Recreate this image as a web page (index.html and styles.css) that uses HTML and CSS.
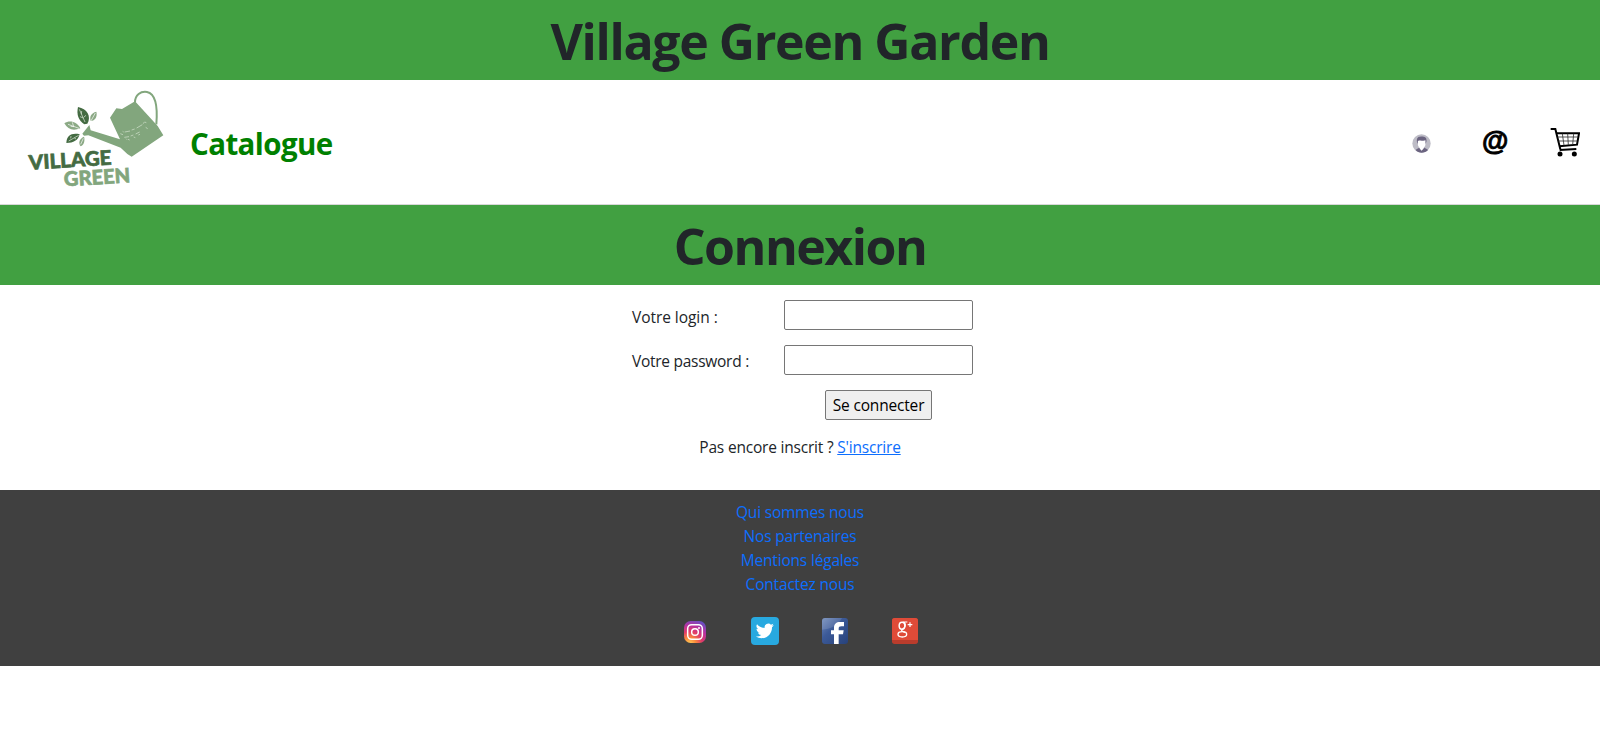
FILE: index.html
```html
<!DOCTYPE html>
<html lang="fr">
<head>
<meta charset="utf-8">
<title>Village Green Garden</title>
<link rel="stylesheet" href="styles.css">
</head>
<body>
<header class="banner"><h1 class="banner-title title-site">Village Green Garden</h1></header>
<nav class="navbar">
  <svg class="logo" viewBox="0 0 450 330" role="img" aria-label="Village Green">
    <path d="M345 52C345 30 362 18 381 21C410 27 413 70 409 118" fill="none" stroke="#82a67d" stroke-width="6"/>
    <path d="M270 98L289 70L306 72L345 49L413 123L430 151L335 215L322 207L302 188L205 151L192 152L187 146L208 120L212 136L300 163Z" fill="#82a67d"/>
    <path d="M301 146l8 3m5-8l16-3m5-3l9-3m6-3l17-10m-54 38l14-2m5-2l8-3m7-3l12-6m11-25l3-5m4 16l6 4m-9-20l5 2m-55 50l5 2m12-9l5 2m9-8l5-2m-52-9l3 2m7 20l3 3" fill="none" stroke="#c9dac4" stroke-width="2.4"/>
    <path d="M174 66C201 71 215 94 202 116L193 118C175 106 169 88 174 66Z" fill="#446b42"/>
    <path d="M178 73L195 111M184 88l1-10m6 19l7-6m-8 8l-10-4" fill="none" stroke="#e5eee1" stroke-width="2"/>
    <path d="M229 80C233 95 225 107 212 108C208 95 213 84 229 80Z" fill="#8ba985"/>
    <path d="M226 84L211 111" stroke="#fff" stroke-width="2"/>
    <path d="M133 115C148 104 172 110 181 130C159 139 143 133 133 115Z" fill="#8ba985"/>
    <path d="M144 118L177 130M157 112l4 13m-9-1l10 1" fill="none" stroke="#fff" stroke-width="2"/>
    <path d="M139 174C140 151 155 143 179 148C174 166 161 174 139 174Z" fill="#446b42"/>
    <path d="M146 168L176 151M152 160l1-7m10 6l5 3" fill="none" stroke="#e5eee1" stroke-width="2"/>
    <path d="M192 155C196 168 191 180 182 184C174 174 178 161 192 155Z" fill="#8ba985"/>
    <path d="M190 160L182 178" stroke="#fff" stroke-width="2"/>
    <text class="logo-dark" transform="translate(28 254) rotate(-3.5)" textLength="248" lengthAdjust="spacingAndGlyphs">VILLAGE</text>
    <text class="logo-light" transform="translate(133 304) rotate(-3.5)" textLength="199" lengthAdjust="spacingAndGlyphs">GREEN</text>
  </svg>
  <a class="nav-link">Catalogue</a>
  <div class="nav-icons">
    <svg class="ico-user" viewBox="0 0 58 58"><circle cx="29" cy="29" r="28" fill="#bdbcc6"/><path d="M11 49C14 44 22 44 23 41h14c1 3 9 3 12 8C39 60 20 60 11 49Z" fill="#6b6480"/><path d="M15 24C13 9 22 8 30 8S46 10 44 24l-2 5H17Z" fill="#6b6480"/><path d="M18 21C28 17 33 23 41 19V31C41 38 36 40 35 45L29 51L24 45C23 40 18 38 18 31Z" fill="#fff"/></svg>
    <span class="ico-at">@</span>
    <svg class="ico-cart" viewBox="0 0 90 90"><path d="M2 6H16L31 67" fill="none" stroke="#000" stroke-width="6"/><path d="M20 19H87L81 53L28 58" fill="none" stroke="#000" stroke-width="6"/><path d="M37 20l5 35M53 20l2 34M71 20l-3 33M23 30H84M25 42H82" fill="none" stroke="#333" stroke-width="2.5"/><path d="M29 69L79 66" stroke="#000" stroke-width="6"/><circle cx="30" cy="81" r="7.5"/><circle cx="73" cy="81" r="7.5"/></svg>
  </div>
</nav>
<section class="banner"><h1 class="banner-title title-page">Connexion</h1></section>
<main class="content">
  <form class="login">
    <label class="label label-login" for="login">Votre login :</label><input class="field" id="login" type="text">
    <label class="label label-password" for="password">Votre password :</label><input class="field" id="password" type="password">
    <button class="submit" type="button">Se connecter</button>
  </form>
  <p class="signup">Pas encore inscrit ? <a class="signup-link" href="#">S'inscrire</a></p>
</main>
<footer class="footer">
  <a class="footer-link">Qui sommes nous</a>
  <a class="footer-link">Nos partenaires</a>
  <a class="footer-link">Mentions légales</a>
  <a class="footer-link">Contactez nous</a>
  <div class="social">
    <svg class="ico-instagram" viewBox="0 0 66 66"><defs><radialGradient id="ig" cx=".25" cy="1.05" r="1.15"><stop offset="0" stop-color="#ffd45a"/><stop offset=".25" stop-color="#fb8b3c"/><stop offset=".5" stop-color="#e03a68"/><stop offset=".75" stop-color="#b532a0"/><stop offset="1" stop-color="#6550c5"/></radialGradient></defs><rect width="66" height="66" rx="20" fill="url(#ig)"/><rect x="11" y="11" width="44" height="44" rx="12" fill="none" stroke="#fff" stroke-width="4.5"/><circle cx="33" cy="33" r="10" fill="none" stroke="#fff" stroke-width="4.5"/><circle cx="45" cy="21" r="3" fill="#fff"/></svg>
    <svg class="ico-twitter" viewBox="0 0 84 84"><rect width="84" height="84" rx="12" fill="#28a9e0"/><path transform="translate(14.5 14.5) scale(2.25)" fill="#fff" d="M23.95 4.57a10 10 0 0 1-2.82.77 4.96 4.96 0 0 0 2.16-2.72c-.95.56-2 .95-3.13 1.18a4.92 4.92 0 0 0-8.38 4.48C7.69 8.1 4.07 6.13 1.64 3.16a4.92 4.92 0 0 0 1.52 6.57 4.9 4.9 0 0 1-2.23-.61v.06a4.92 4.92 0 0 0 3.95 4.83 5 5 0 0 1-2.21.08 4.94 4.94 0 0 0 4.6 3.42A9.87 9.87 0 0 1 0 19.54a13.99 13.99 0 0 0 7.56 2.21c9.05 0 14-7.5 14-13.98v-.64a9.94 9.94 0 0 0 2.46-2.55Z"/></svg>
    <svg class="ico-facebook" viewBox="0 0 78 78"><defs><linearGradient id="fb" x2="1" y2="1"><stop offset="0" stop-color="#6f89b8"/><stop offset=".4" stop-color="#3c5a98"/><stop offset="1" stop-color="#27427b"/></linearGradient></defs><rect width="78" height="78" rx="9" fill="url(#fb)"/><path d="M0 35C25 33 48 24 60 0H9Q0 0 0 9Z" fill="#fff" opacity=".13"/><path d="M36 78V49H27V37H36V29C36 18 43 12 54 12H66V25H58C52 25 50 27 50 32V37H65L63 49H50V78Z" fill="#fff"/></svg>
    <svg class="ico-google" viewBox="0 0 78 78"><rect width="78" height="78" rx="8" fill="#b93c2c"/><path d="M8 0H70Q78 0 78 8V66H0V8Q0 0 8 0Z" fill="#df4b38"/><g fill="none" stroke="#fff"><ellipse cx="30" cy="23" rx="8.5" ry="10.5" stroke-width="4.5"/><path d="M32 12H46M37 13Q43 20 37 29L29 36Q27 39 39 43" stroke-width="3.5"/><ellipse cx="31" cy="49" rx="13" ry="8" stroke-width="4"/><path d="M54 13V27M47 20H61" stroke-width="3.5"/></g></svg>
  </div>
</footer>
</body>
</html>
```
FILE: styles.css
```css
* { box-sizing: border-box; }
body { margin: 0; background: #fff; color: #212529; font: 15.5px/24px "Open Sans", "Noto Sans", sans-serif; }
svg { display: block; flex: none; }
.banner { height: 80px; background: #41a041; display: flex; justify-content: center; padding-top: 4px; }
.banner-title { margin: 0; font-size: 50px; line-height: 75px; font-weight: 700; white-space: nowrap; }
.title-site { letter-spacing: -1.3px; word-spacing: -.5px; }
.title-page { letter-spacing: -1.5px; }
.navbar { height: 125px; border-bottom: 1px solid #d8d8d8; display: flex; padding: 5px 20px 0; }
.logo { width: 150px; height: 110px; }
.logo text { font-family: Lato, "Open Sans", sans-serif; font-weight: 900; font-size: 60px; stroke-width: 2; }
.logo-dark { fill: #446b42; stroke: #446b42; }
.logo-light { fill: #82a67d; stroke: #82a67d; }
.nav-link { margin: 39px 0 0 20px; font-size: 29.5px; line-height: 40px; font-weight: 700; color: #008000; letter-spacing: -.6px; }
.nav-icons { display: flex; margin-left: auto; align-items: flex-start; }
.ico-user { width: 19px; height: 19px; margin: 49px 51px 0 0; }
.ico-at { width: 27px; margin: 39px 41px 0 0; font: 700 27px/34px "Liberation Sans", Arial, sans-serif; color: #000; -webkit-text-stroke: .9px #000; }
.ico-cart { width: 30px; height: 30px; margin-top: 42px; }
.content { height: 205px; padding-top: 15px; }
.login { display: grid; grid-template-columns: 152px 189px; grid-auto-rows: 30px; row-gap: 15px; width: 341px; margin-left: 632px; }
.label { padding-top: 5px; white-space: nowrap; }
.label-login { letter-spacing: -.05px; }
.label-password { padding-top: 4px; letter-spacing: -.27px; }
.field { width: 189px; height: 30px; border: 1px solid #767676; border-radius: 2px; padding: 1px 2px; background: #fff; }
.submit { grid-column: 2; justify-self: center; width: 107px; height: 30px; padding: 0; border: 1px solid #767676; border-radius: 2px; background: #efefef; color: #000; font: inherit; letter-spacing: -.17px; white-space: nowrap; }
.signup { margin: 15px 0 0; text-align: center; letter-spacing: -.2px; }
.signup-link { color: #0d6efd; }
.footer { height: 176px; padding-top: 10px; background: #404040; display: flex; flex-direction: column; align-items: center; }
.footer-link { color: #0d6efd; letter-spacing: -.18px; }
.social { display: flex; align-items: flex-start; margin: 21px 0 0 2px; width: 234px; }
.ico-instagram { width: 22px; height: 22px; margin: 4px 45px 0 0; }
.ico-twitter { width: 28px; height: 28px; margin-right: 43px; }
.ico-facebook { width: 26px; height: 26px; margin: 1px 44px 0 0; }
.ico-google { width: 26px; height: 26px; margin-top: 1px; }
```
